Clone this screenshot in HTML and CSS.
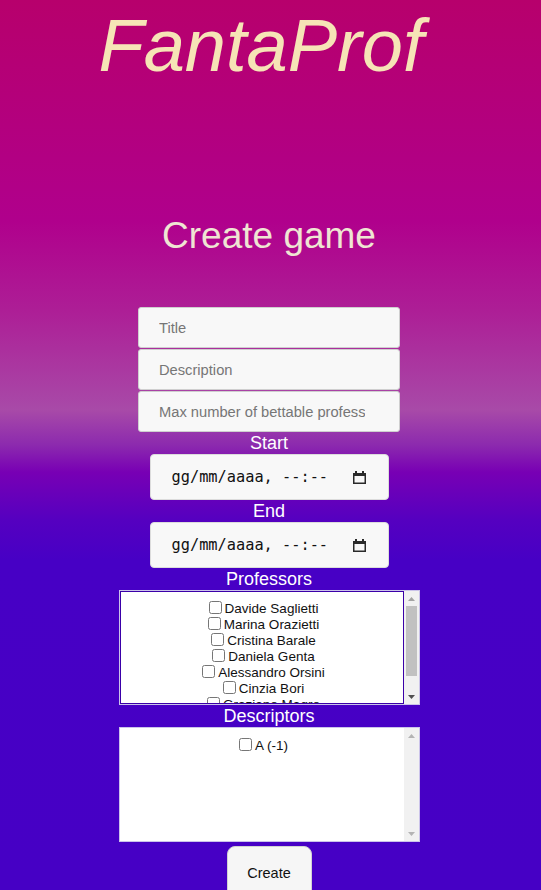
FILE: index.html
```html
<!DOCTYPE html>
<html lang="en">
<head>
<meta charset="utf-8">
<title>FantaProf - Create game</title>
<link rel="stylesheet" href="styles.css">
</head>
<body>
<div class="page">
  <header class="brand">FantaProf</header>
  <h2 class="heading">Create game</h2>
  <form class="form">
    <input class="field" type="text" placeholder="Title">
    <input class="field" type="text" placeholder="Description">
    <input class="field field-last" type="text" placeholder="Max number of bettable professors">
    <div class="label">Start</div>
    <div class="date">
      <span class="date-text">gg/mm/aaaa, --:--</span>
      <svg class="cal" width="13" height="13" viewBox="0 0 13 13"><rect x="0.75" y="2.75" width="11.5" height="9.5" fill="none" stroke="#2a2a2a" stroke-width="1.5"/><rect x="0" y="2" width="13" height="3" fill="#2a2a2a"/><rect x="2" y="0" width="2" height="3" fill="#2a2a2a"/><rect x="9" y="0" width="2" height="3" fill="#2a2a2a"/></svg>
    </div>
    <div class="label">End</div>
    <div class="date">
      <span class="date-text">gg/mm/aaaa, --:--</span>
      <svg class="cal" width="13" height="13" viewBox="0 0 13 13"><rect x="0.75" y="2.75" width="11.5" height="9.5" fill="none" stroke="#2a2a2a" stroke-width="1.5"/><rect x="0" y="2" width="13" height="3" fill="#2a2a2a"/><rect x="2" y="0" width="2" height="3" fill="#2a2a2a"/><rect x="9" y="0" width="2" height="3" fill="#2a2a2a"/></svg>
    </div>
    <div class="label">Professors</div>
    <div class="box">
      <div class="viewport viewport-focus">
        <ul class="list">
          <li><label><input type="checkbox">Davide Saglietti</label></li>
          <li><label><input type="checkbox">Marina Orazietti</label></li>
          <li><label><input type="checkbox">Cristina Barale</label></li>
          <li><label><input type="checkbox">Daniela Genta</label></li>
          <li><label><input type="checkbox">Alessandro Orsini</label></li>
          <li><label><input type="checkbox">Cinzia Bori</label></li>
          <li><label><input type="checkbox">Graziano Magro</label></li>
        </ul>
      </div>
      <div class="sbar">
        <div class="sbtn"><svg width="7" height="4" viewBox="0 0 7 4"><polygon points="3.5,0 7,4 0,4" fill="#a3a3a3"/></svg></div>
        <div class="track"><div class="thumb"></div></div>
        <div class="sbtn"><svg width="7" height="4" viewBox="0 0 7 4"><polygon points="0,0 7,0 3.5,4" fill="#505050"/></svg></div>
      </div>
    </div>
    <div class="label">Descriptors</div>
    <div class="box">
      <div class="viewport">
        <ul class="list">
          <li><label><input type="checkbox">A (-1)</label></li>
        </ul>
      </div>
      <div class="sbar">
        <div class="sbtn"><svg width="7" height="4" viewBox="0 0 7 4"><polygon points="3.5,0 7,4 0,4" fill="#b4b4b4"/></svg></div>
        <div class="track"></div>
        <div class="sbtn"><svg width="7" height="4" viewBox="0 0 7 4"><polygon points="0,0 7,0 3.5,4" fill="#b4b4b4"/></svg></div>
      </div>
    </div>
    <button class="create" type="button">Create</button>
  </form>
</div>
</body>
</html>
```
FILE: styles.css
```css
html, body {
  margin: 0;
  padding: 0;
}
body {
  min-height: 890px;
  font-family: "Liberation Sans", Arial, sans-serif;
  background: linear-gradient(180deg,
    #b7006c 0px,
    #b0008c 220px,
    #ad1e96 310px,
    #a84aa8 410px,
    #8c2aae 445px,
    #7800b4 472px,
    #5500c0 520px,
    #4700c5 560px,
    #4600c5 890px);
  background-repeat: no-repeat;
}
.page {
  display: flex;
  flex-direction: column;
  align-items: center;
  padding-right: 3px;
}
.brand {
  font-style: italic;
  font-size: 74px;
  line-height: 85px;
  color: #f6e4b6;
  margin-top: 3px;
  margin-right: 16px;
}
.heading {
  margin: 126px 0 0;
  font-weight: normal;
  font-size: 37px;
  line-height: 43px;
  color: #efe5d3;
}
.form {
  margin-top: 50px;
  display: flex;
  flex-direction: column;
  align-items: center;
}
.field {
  box-sizing: border-box;
  width: 262px;
  height: 41px;
  margin: 0 0 1px;
  padding: 0 34px 0 20px;
  border: 1px solid #cfcfcf;
  border-radius: 3px;
  background: #f8f8f8;
  font-family: "Liberation Sans", Arial, sans-serif;
  font-size: 14.7px;
  color: #333;
  outline: none;
}
.field-last {
  margin-bottom: 0;
}
.field::placeholder {
  color: #767676;
}
.label {
  color: #ffffff;
  font-size: 18px;
  line-height: 22px;
  text-align: center;
}
.date {
  box-sizing: border-box;
  width: 239px;
  height: 46px;
  display: flex;
  align-items: center;
  justify-content: space-between;
  padding: 0 22px 0 21px;
  background: #f8f8f8;
  border: 1px solid #dcdcdc;
  border-radius: 4px;
}
.date-text {
  font-family: "DejaVu Sans Mono", "Liberation Mono", monospace;
  font-size: 15.3px;
  color: #111;
}
.cal {
  display: block;
}
.box {
  box-sizing: border-box;
  width: 301px;
  height: 115px;
  display: flex;
  background: #ffffff;
  border: 1px solid #cbc3ea;
}
.viewport {
  flex: 1;
  overflow: hidden;
  border: 1px solid transparent;
}
.viewport-focus {
  border-color: #3a00a8;
}
.sbar {
  width: 15px;
  display: flex;
  flex-direction: column;
  background: #f1f1f1;
}
.sbtn {
  height: 15px;
  display: flex;
  align-items: center;
  justify-content: center;
}
.sbtn svg {
  display: block;
}
.track {
  flex: 1;
  padding: 0 2px;
}
.thumb {
  height: 70px;
  background: #c1c1c1;
}
.list {
  list-style: none;
  margin: 0;
  padding: 9px 0 12px;
  text-align: center;
  font-size: 13.5px;
  line-height: 16px;
  color: #111;
}
.list li {
  height: 16px;
}
.list input {
  width: 13px;
  height: 13px;
  margin: 0 3px 0 4px;
  vertical-align: -1px;
}
.create {
  margin-top: 4px;
  box-sizing: border-box;
  width: 85px;
  height: 54px;
  padding: 0;
  background: #f6f6f6;
  border: 1px solid #d2d2d2;
  border-radius: 8px;
  font-family: "Liberation Sans", Arial, sans-serif;
  font-size: 14.5px;
  color: #111;
}
```
